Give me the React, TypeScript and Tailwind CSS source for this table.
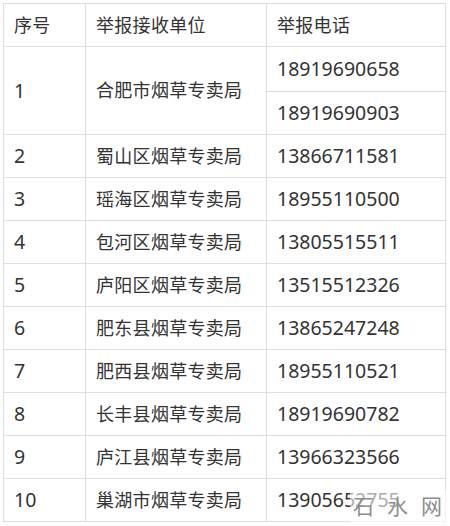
const rows: { no: string; unit: string; phones: string[] }[] = [
  { no: "1", unit: "合肥市烟草专卖局", phones: ["18919690658", "18919690903"] },
  { no: "2", unit: "蜀山区烟草专卖局", phones: ["13866711581"] },
  { no: "3", unit: "瑶海区烟草专卖局", phones: ["18955110500"] },
  { no: "4", unit: "包河区烟草专卖局", phones: ["13805515511"] },
  { no: "5", unit: "庐阳区烟草专卖局", phones: ["13515512326"] },
  { no: "6", unit: "肥东县烟草专卖局", phones: ["13865247248"] },
  { no: "7", unit: "肥西县烟草专卖局", phones: ["18955110521"] },
  { no: "8", unit: "长丰县烟草专卖局", phones: ["18919690782"] },
  { no: "9", unit: "庐江县烟草专卖局", phones: ["13966323566"] },
  { no: "10", unit: "巢湖市烟草专卖局", phones: ["13905652755"] },
];

const cell = "border border-[#dedede] px-[10px] text-left align-middle font-normal";
const cjk = "text-[18px] tracking-[0.3px]";
const num = "text-[19.5px]";

export default function App() {
  return (
    <div
      className="relative h-[526px] w-[450px] overflow-hidden bg-white p-[3px] text-[#333]"
      style={{ fontFamily: '"Noto Sans", "Noto Sans CJK SC", sans-serif' }}
    >
      <table className="w-[442px] table-fixed border-collapse">
        <colgroup>
          <col className="w-[82px]" />
          <col className="w-[181px]" />
          <col className="w-[179px]" />
        </colgroup>
        <thead>
          <tr className="h-[43px]">
            <th className={`${cell} ${cjk}`}>序号</th>
            <th className={`${cell} ${cjk}`}>举报接收单位</th>
            <th className={`${cell} ${cjk}`}>举报电话</th>
          </tr>
        </thead>
        <tbody>
          {rows.flatMap((r) =>
            r.phones.map((p, i) => (
              <tr key={p} className={r.phones.length > 1 && i === 0 ? "h-[45px]" : "h-[43px]"}>
                {i === 0 && (
                  <>
                    <td rowSpan={r.phones.length} className={`${cell} ${num}`}>
                      {r.no}
                    </td>
                    <td rowSpan={r.phones.length} className={`${cell} ${cjk}`}>
                      {r.unit}
                    </td>
                  </>
                )}
                <td className={`${cell} ${num}`}>{p}</td>
              </tr>
            ))
          )}
        </tbody>
      </table>

      {/* watermark over the last number */}
      <div className="absolute left-[350px] top-[490px] flex h-[32px] w-[100px] items-center whitespace-nowrap bg-white/60 pl-[3px]">
        <span className="text-[21px] leading-none tracking-[13px] text-[#8e8e8e]">
          石水<span className="tracking-normal">网</span>
        </span>
      </div>
    </div>
  );
}
